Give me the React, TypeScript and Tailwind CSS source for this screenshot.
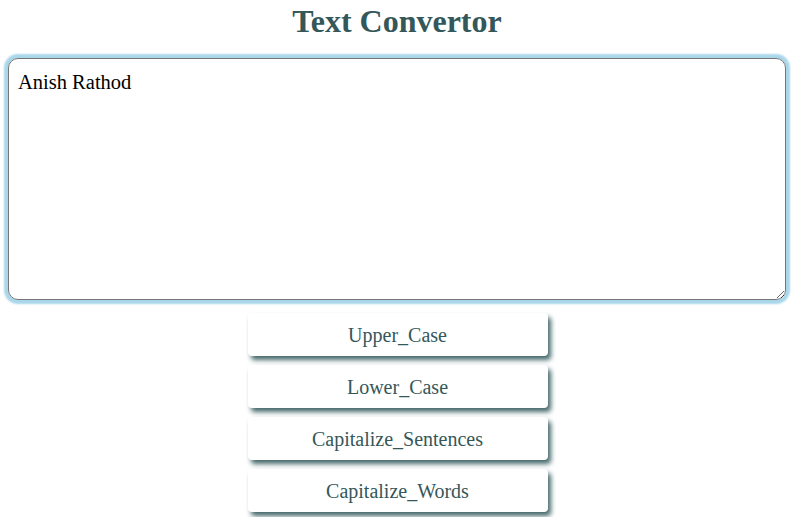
import React, { useState } from 'react';

const buttons = ['Upper_Case', 'Lower_Case', 'Capitalize_Sentences', 'Capitalize_Words'];

const App: React.FC = () => {
  const [text, setText] = useState('Anish Rathod');

  return (
    <div className="min-h-screen bg-white px-2 font-['Liberation_Serif',serif]">
      <h1 className="pt-[3px] text-center text-[32px] font-bold leading-[36px] text-[#34575a]">
        Text Convertor
      </h1>
      <textarea
        value={text}
        onChange={(e) => setText(e.target.value)}
        className="mt-[19px] block h-[242px] w-full rounded-[10px] border border-[#767676] px-[9px] py-[12px] font-['Liberation_Serif',serif] text-[20.5px] leading-[22px] text-black shadow-[0_0_2px_4px_#a9d7ea] outline-none"
      />
      <div className="mt-[13px] flex flex-col items-center gap-[9px]">
        {buttons.map((label) => (
          <button
            key={label}
            className="ml-px h-[43px] w-[300px] rounded-[4px] bg-white text-[20px] text-[#34575a] shadow-[3px_4px_5px_#46686a]"
          >
            {label}
          </button>
        ))}
      </div>
    </div>
  );
};

export default App;
